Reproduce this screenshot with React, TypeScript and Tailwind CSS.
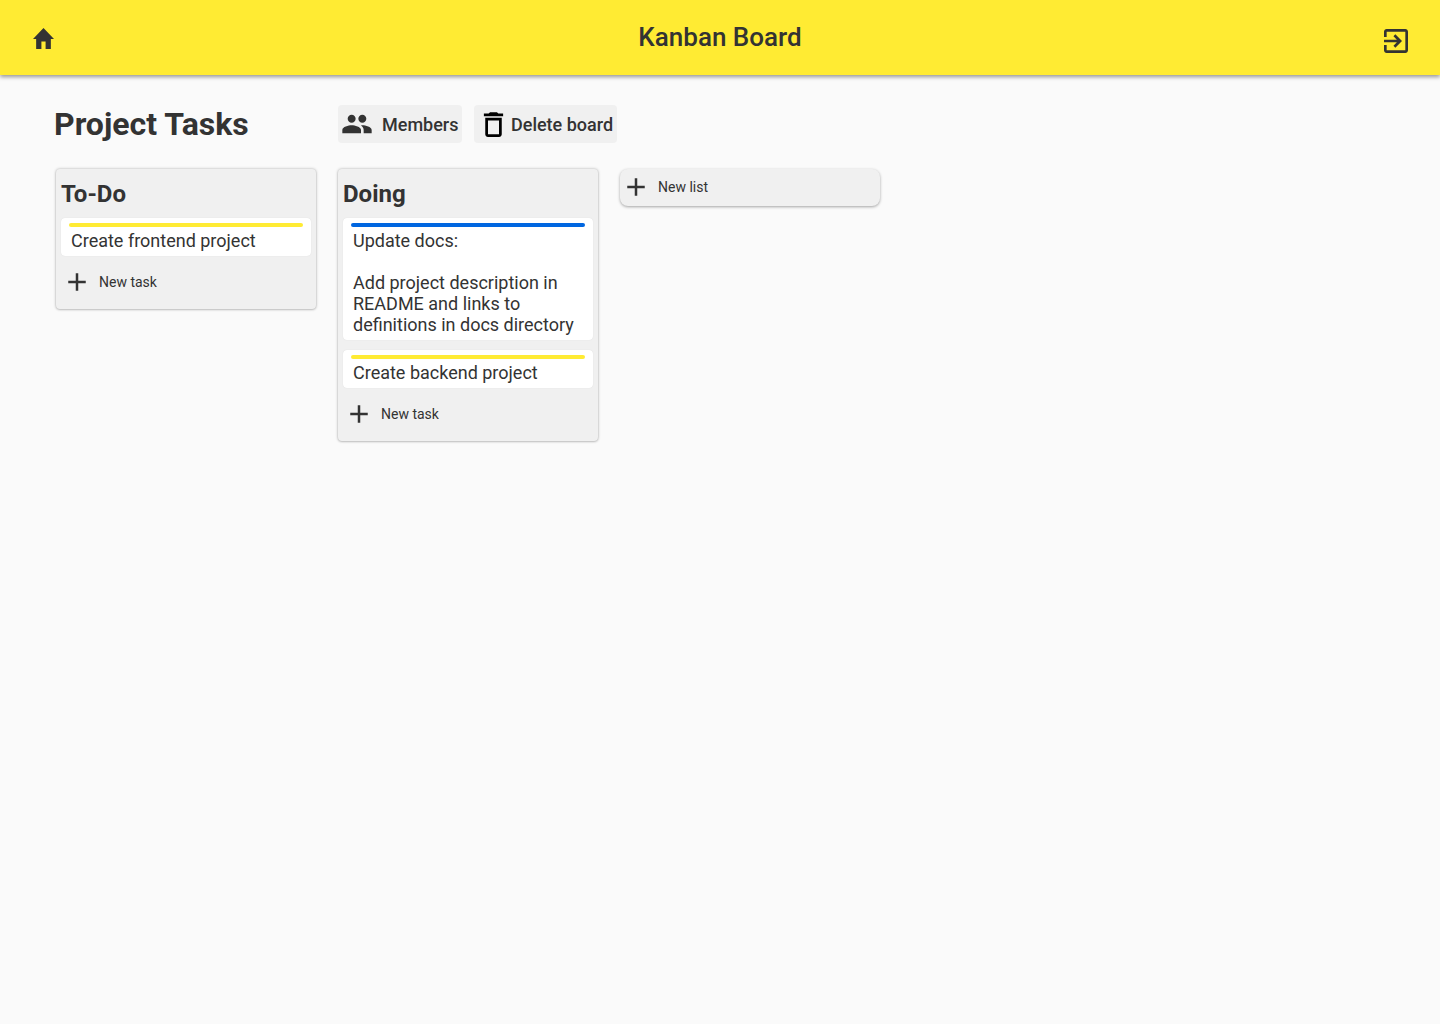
const ICONS = {
  home: "M10 20v-6h4v6h5v-8h3L12 3 2 12h3v8z",
  people:
    "M16 11c1.66 0 2.99-1.34 2.99-3S17.66 5 16 5c-1.66 0-3 1.34-3 3s1.34 3 3 3zm-8 0c1.66 0 2.99-1.34 2.99-3S9.66 5 8 5C6.34 5 5 6.34 5 8s1.34 3 3 3zm0 2c-2.33 0-7 1.17-7 3.5V19h14v-2.5c0-2.33-4.67-3.5-7-3.5zm8 0c-.29 0-.62.02-.97.05 1.16.84 1.97 1.97 1.97 3.45V19h6v-2.5c0-2.33-4.67-3.5-7-3.5z",
  trash:
    "M6 19c0 1.1.9 2 2 2h8c1.1 0 2-.9 2-2V7H6v12zM8 9h8v10H8V9zm7.5-5l-1-1h-5l-1 1H5v2h14V4z",
  exit: "M10.09 15.59L11.5 17l5-5-5-5-1.41 1.41L12.67 11H3v2h9.67l-2.58 2.59zM19 3H5c-1.11 0-2 .9-2 2v4h2V5h14v14H5v-4H3v4c0 1.1.89 2 2 2h14c1.1 0 2-.9 2-2V5c0-1.1-.9-2-2-2z",
  add: "M19 13h-6v6h-2v-6H5v-2h6V5h2v6h6v2z",
};

function Icon({ d, className }: { d: string; className: string }) {
  return (
    <svg viewBox="0 0 24 24" className={className} fill="currentColor">
      <path d={d} />
    </svg>
  );
}

type Task = { color: string; lines: string[] };

function TaskCard({ task }: { task: Task }) {
  return (
    <div className="bg-white rounded-[4px] shadow-[0_0_1px_rgba(0,0,0,0.12)] pt-[5px] pb-[5px] px-[8px]">
      <div className={`h-[4px] rounded-full ${task.color}`} />
      <div className="pl-[2px] pt-[3px] text-[18px] leading-[21px] text-[#333333]">
        {task.lines.map((line, i) => (
          <div key={i} className="whitespace-pre">
            {line || " "}
          </div>
        ))}
      </div>
    </div>
  );
}

function NewRow({ label }: { label: string }) {
  return (
    <div className="flex items-center text-[#333333]">
      <Icon d={ICONS.add} className="w-[30px] h-[30px]" />
      <span className="ml-[7px] text-[14px] leading-[20px]">{label}</span>
    </div>
  );
}

function Column({ title, tasks }: { title: string; tasks: Task[] }) {
  return (
    <div className="w-[260px] bg-[#f0f0f0] rounded-[4px] shadow-[0_0_3px_rgba(0,0,0,0.3),0_1px_2px_rgba(0,0,0,0.12)] px-[5px] pb-[12px]">
      <h2 className="pt-[11px] text-[24px] leading-[28px] font-bold text-[#333333] mb-[10px]">{title}</h2>
      <div className="flex flex-col gap-[10px]">
        {tasks.map((task) => (
          <TaskCard key={task.lines[0]} task={task} />
        ))}
      </div>
      <div className="pt-[11px] pl-px">
        <NewRow label="New task" />
      </div>
    </div>
  );
}

export default function App() {
  return (
    <div className="min-h-[1024px] bg-[#fafafa] font-['Roboto',sans-serif] text-[#333333]">
      <header className="relative h-[75px] bg-[#ffeb33] shadow-[0_2px_4px_rgba(0,0,0,0.4)] grid grid-cols-[1fr_auto_1fr] items-center px-[33px]">
        <svg viewBox="2 3 20 17" preserveAspectRatio="none" className="w-[21px] h-[21px] mt-[2px]" fill="currentColor">
          <path d={ICONS.home} />
        </svg>
        <h1 className="text-[26px] leading-[30px] font-medium -mt-[1px]">Kanban Board</h1>
        <Icon d={ICONS.exit} className="w-[32px] h-[32px] mt-[6px] -mr-[5px] justify-self-end" />
      </header>

      <main className="pl-[54px] pt-[30px]">
        <div className="flex items-center h-[38px]">
          <h1 className="w-[284px] text-[32px] leading-[38px] font-bold">Project Tasks</h1>
          <div className="flex gap-[12px]">
            <button className="h-[38px] w-[124px] flex items-center bg-[#f0f0f0] rounded-[4px] pl-[3px]">
              <Icon d={ICONS.people} className="w-[32px] h-[32px]" />
              <span className="ml-[9px] text-[18px] font-medium">Members</span>
            </button>
            <button className="h-[38px] w-[143px] flex items-center bg-[#f0f0f0] rounded-[4px] pl-[3px]">
              <Icon d={ICONS.trash} className="w-[33px] h-[33px] text-black" />
              <span className="ml-px text-[18px] font-medium">Delete board</span>
            </button>
          </div>
        </div>

        <div className="flex items-start mt-[26px] pl-[2px] gap-[22px]">
          <Column
            title="To-Do"
            tasks={[{ color: "bg-[#ffeb33]", lines: ["Create frontend project"] }]}
          />
          <Column
            title="Doing"
            tasks={[
              {
                color: "bg-[#0066e0]",
                lines: [
                  "Update docs:",
                  "",
                  "Add project description in",
                  "README and links to",
                  "definitions in docs directory",
                ],
              },
              { color: "bg-[#ffeb33]", lines: ["Create backend project"] },
            ]}
          />
          <div className="w-[260px] h-[37px] flex items-center bg-[#f0f0f0] rounded-[8px] shadow-[0_1px_3px_rgba(0,0,0,0.35)] pl-[1px] pb-px">
            <NewRow label="New list" />
          </div>
        </div>
      </main>
    </div>
  );
}
